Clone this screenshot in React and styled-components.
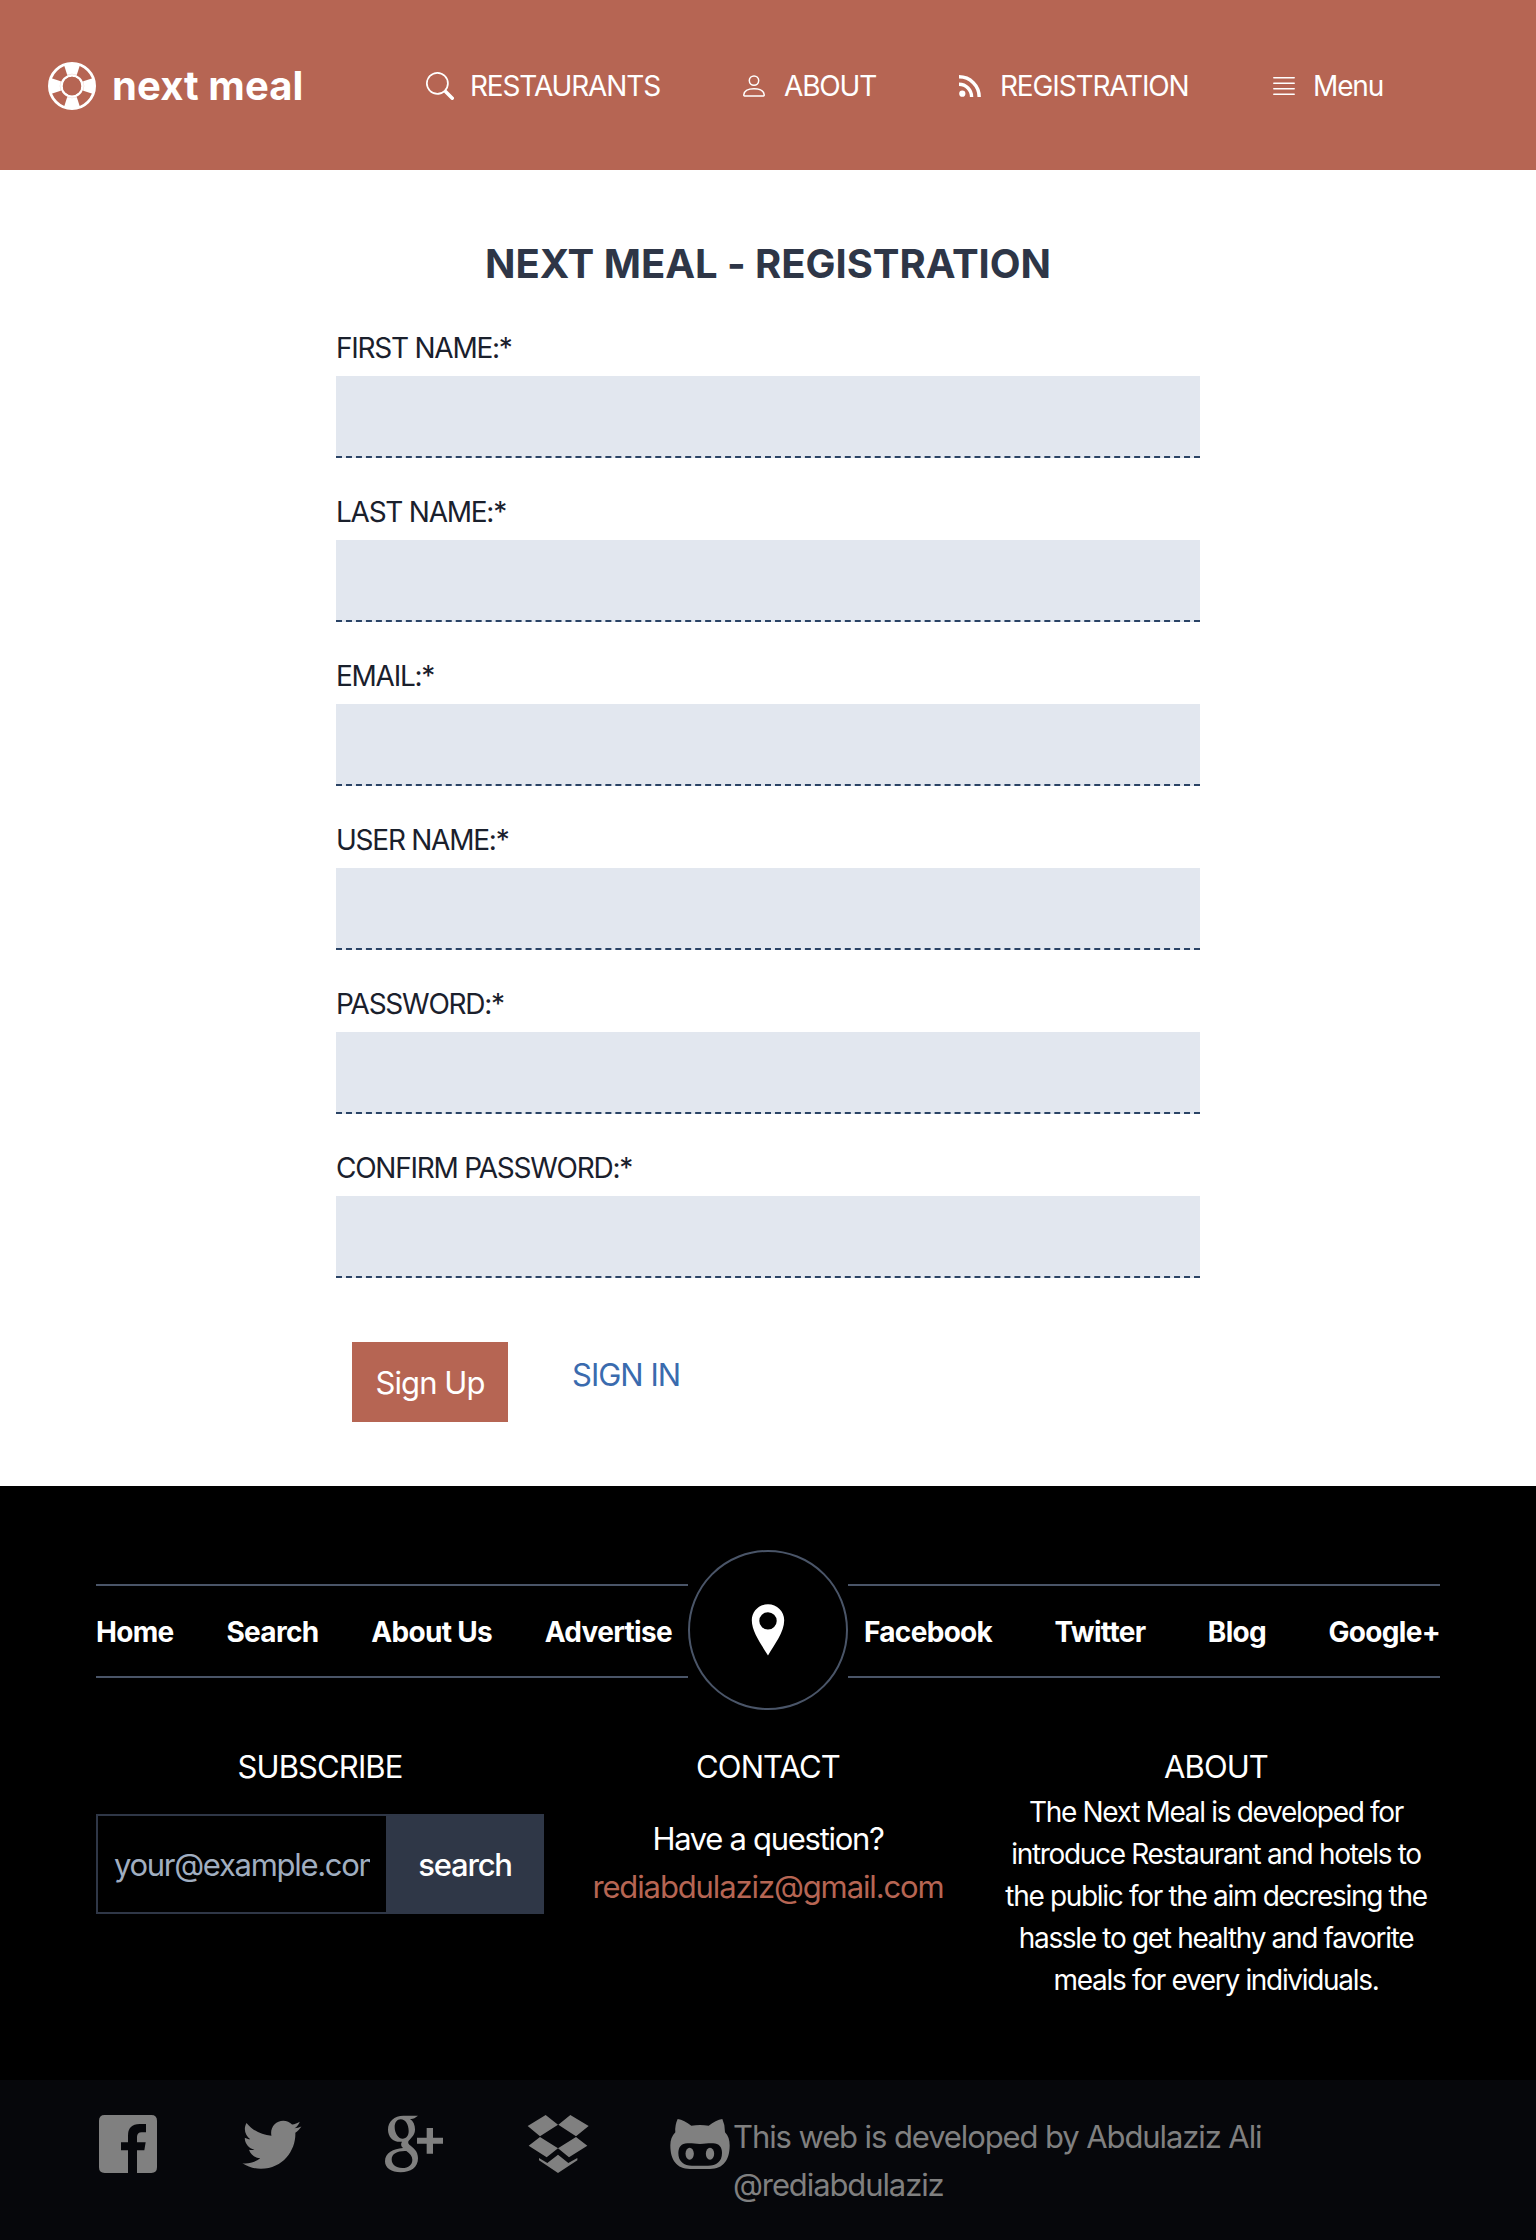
import React from "react";
import styled, { createGlobalStyle } from "styled-components";
import { IoLogoTwitter } from "react-icons/io";
import { BsSearch } from "react-icons/bs";

const Global = createGlobalStyle`
  *, *::before, *::after { box-sizing: border-box; }
  body {
    margin: 0;
    font-family: Inter, "Liberation Sans", sans-serif;
    font-size: 32px;
    line-height: 1.5;
    color: #1a202c;
    background: #fff;
  }
  h1, h2, p { margin: 0; font-weight: 400; }
  a { color: inherit; text-decoration: none; }
  input, button { font: inherit; border: 0; border-radius: 0; margin: 0; outline: 0; }
  svg { display: block; flex: none; }
`;

const Header = styled.header`
  height: 170px;
  padding: 2px 48px 0;
  display: flex;
  align-items: center;
  background: #b66553;
  color: #fff;
`;
const Brand = styled.a`
  display: flex;
  align-items: center;
  width: 378px;
  font-size: 40px;
  font-weight: 700;
  white-space: nowrap;
`;
const BrandName = styled.span`
  margin-left: 16px;
  letter-spacing: 0.1px;
`;
const NavLink = styled.a`
  display: flex;
  align-items: center;
  width: ${(p) => p.$w}px;
  font-size: 28px;
  letter-spacing: -1.15px;
  white-space: nowrap;
`;
const NavIcon = styled.span`
  display: flex;
  width: ${(p) => p.$w}px;
`;

const Main = styled.main`
  width: 864px;
  height: 1316px;
  margin: 0 auto;
  padding-top: 64px;
`;
const Title = styled.h1`
  font-size: 40px;
  line-height: 60px;
  font-weight: 700;
  text-align: center;
  color: #2e3647;
  letter-spacing: -0.05px;
`;
const Form = styled.form`
  padding-top: 32px;
`;
const Field = styled.label`
  display: block;
  height: 164px;
  padding-top: 1px;
  font-size: 28px;
  line-height: 42px;
  letter-spacing: -1.25px;
`;
const Input = styled.input`
  display: block;
  width: 100%;
  height: 82px;
  margin-top: 7px;
  padding: 16px;
  background: #e2e7ef;
  border-bottom: 2px dashed #2a4365;
`;
const Actions = styled.div`
  display: flex;
  align-items: flex-start;
  padding: 32px 16px 0;
`;
const SignUp = styled.button`
  width: 156px;
  height: 80px;
  padding: 2px 0 0;
  background: #b66553;
  color: #fff;
  font-size: 31px;
  letter-spacing: -0.95px;
`;
const SignIn = styled.a`
  margin: 10px 0 0 64px;
  color: #3a6bae;
  font-size: 31px;
  letter-spacing: -1px;
`;

const Footer = styled.footer`
  background: #000;
  color: #fff;
`;
const FooterTop = styled.div`
  height: 594px;
  padding: 64px 96px 0;
`;
const LinkBar = styled.nav`
  display: flex;
  align-items: center;
`;
const LinkGroup = styled.div`
  flex: 1;
  display: flex;
  align-items: center;
  justify-content: space-between;
  height: 94px;
  margin-top: 2px;
  padding: 2px ${(p) => (p.$side === "left" ? "16px" : "0")} 0 ${(p) => (p.$side === "right" ? "16px" : "0")};
  border-top: 2px solid #4a5568;
  border-bottom: 2px solid #4a5568;
`;
const FooterLink = styled.a`
  font-size: 28px;
  font-weight: 700;
  letter-spacing: -0.68px;
`;
const PinCircle = styled.div`
  width: 160px;
  height: 160px;
  display: flex;
  align-items: center;
  justify-content: center;
  border: 2px solid #4a5568;
  border-radius: 50%;
`;
const Columns = styled.div`
  display: grid;
  grid-template-columns: repeat(3, 448px);
  padding-top: 33px;
`;
const Column = styled.section`
  text-align: center;
`;
const ColumnTitle = styled.h2`
  font-size: 31px;
  line-height: 48px;
  letter-spacing: -0.9px;
`;
const Subscribe = styled.form`
  display: flex;
  width: 448px;
  height: 100px;
  margin-top: 23px;
`;
const EmailInput = styled.input`
  width: 290px;
  padding: 2px 16px 0;
  background: #000;
  border: 2px solid #2f3747;
  border-right: 0;
  color: #fff;
  font-size: 31px;
  letter-spacing: -1.3px;
  &::placeholder { color: #a0aec0; opacity: 1; }
`;
const SearchButton = styled.button`
  flex: 1;
  padding: 2px 0 0;
  background: #2f3747;
  color: #fff;
  font-size: 31px;
  font-weight: 500;
  letter-spacing: -1.2px;
`;
const Contact = styled.p`
  margin-top: 24px;
  font-size: 31px;
  line-height: 48px;
  letter-spacing: -1.3px;
`;
const Mail = styled.a`
  display: block;
  color: #b66553;
  letter-spacing: -1.12px;
`;
const About = styled.p`
  font-size: 28px;
  line-height: 42px;
  letter-spacing: -1.32px;
`;
const AboutLine = styled.span`
  display: block;
  white-space: nowrap;
`;
const Bottom = styled.div`
  display: flex;
  height: 160px;
  padding: 32px 96px 0;
  background: #06070b;
  color: #808080;
`;
const Social = styled.a`
  width: ${(p) => (p.$last ? 65 : 143)}px;
  height: 64px;
`;
const Credit = styled.p`
  padding-top: 1px;
  font-size: 31px;
  line-height: 48px;
  letter-spacing: -1.1px;
`;

const Lifebuoy = () => (
  <svg width="48" height="48" viewBox="-24 -24 48 48" fill="currentColor">
    <circle r="22.6" fill="none" stroke="currentColor" strokeWidth="2.8" />
    {[0, 90, 180, 270].map((a) => (
      <path key={a} transform={`rotate(${a})`} d="M-8.3 -22 L-4.6 -10.5 H4.6 L8.3 -22 Z" />
    ))}
    <circle r="11.8" fill="none" stroke="#b66553" strokeWidth="0.5" opacity="0.5" />
    <circle r="10.4" fill="none" stroke="currentColor" strokeWidth="2.4" />
    <circle r="9.2" fill="#b66553" />
  </svg>
);
const PersonIcon = () => (
  <svg width="22" height="22" viewBox="0 0 22 22" fill="none" stroke="currentColor" strokeWidth="1.5" strokeLinejoin="round">
    <circle cx="11" cy="5.6" r="4.7" />
    <path d="M1.6 20.9 C1 20.9 .7 20.5 .8 19.8 C1.2 15.8 5 13.7 11 13.7 S20.8 15.8 21.2 19.8 C21.3 20.5 21 20.9 20.4 20.9 Z" />
  </svg>
);
const FeedIcon = () => (
  <svg width="22" height="22" viewBox="0 0 22 22" fill="none" stroke="currentColor" strokeWidth="3.4">
    <circle cx="3.3" cy="18.7" r="3.1" fill="currentColor" stroke="none" />
    <path d="M0 1.8 C11.2 1.8 20.2 10.8 20.2 22 M0 9.2 C7.1 9.2 12.6 14.9 12.6 22" />
  </svg>
);
const LinesIcon = () => (
  <svg width="22" height="20" viewBox="0 0 22 20" fill="none" stroke="currentColor" strokeWidth="1.5" strokeLinecap="round">
    <path d="M.8 1.8 H21.2 M.8 7.2 H21.2 M.8 12.7 H21.2 M.8 18.2 H21.2" />
  </svg>
);
const Pin = () => (
  <svg width="34" height="52" viewBox="0 0 34 52" fill="currentColor">
    <path fillRule="evenodd" d="M17 .3 C8 .3 .8 7.3 .8 16.3 C.8 28 10.5 40.5 17 51.6 C23.5 40.5 33.2 28 33.2 16.3 C33.2 7.3 26 .3 17 .3 Z M17 8.2 A8.7 8.7 0 1 1 17 25.6 A8.7 8.7 0 1 1 17 8.2 Z" />
  </svg>
);
const FacebookIcon = () => (
  <svg width="64" height="64" viewBox="48 126 192 192" fill="currentColor">
    <path d="M74 135 H214 Q231 135 231 152 V292 Q231 309 214 309 H171 V241 H193 L197 217 H171 V201 Q171 187 185 187 H198 V162 H179 Q144 162 144 197 V217 H123 V241 H144 V309 H74 Q57 309 57 292 V152 Q57 135 74 135 Z" />
  </svg>
);
const TwitterIcon = () => <IoLogoTwitter size={64} viewBox="-7 -6 512 512" />;
const GooglePlusIcon = () => (
  <svg width="64" height="64" viewBox="906 126 192 192" fill="currentColor">
    <path fillRule="evenodd" d="M970 137 H1014 L1003 145 Q997 148 990 147 C1000 153 1005 165 1005 178 C1005 192 998 200 991 207 C984 213 982 218 988 224 C998 233 1014 241 1014 265 C1014 292 992 307 962 307 C934 307 915 294 915 274 C915 248 940 237 969 234 C962 228 962 221 966 215 C941 218 924 202 924 179 C924 154 943 137 970 137 Z M962 148 C951 148 944 158 944 171 C944 189 954 206 968 206 C979 206 986 197 986 183 C986 165 977 148 962 148 Z M974 243 C951 243 935 252 935 268 C935 284 947 294 967 294 C986 294 997 284 997 269 C997 258 990 251 979 243 Z" />
    <path d="M1040 174 H1059 V203 H1089 V221 H1059 V251 H1040 V221 H1011 V203 H1040 Z" />
  </svg>
);
const DropboxIcon = () => (
  <svg width="64" height="64" viewBox="135 126 192 192" fill="currentColor">
    <path d="M197 135 L234 164 L180 199 L143 168 Z M271 135 L326 168 L288 199 L235 164 Z M180 201 L234 235 L200 262 L146 227 Z M288 201 L322 227 L267 262 L234 235 Z M234 254 L265 279 L292 264 V271 L234 309 L177 271 V264 L202 279 Z" />
  </svg>
);
const OctocatIcon = () => (
  <svg width="64" height="64" viewBox="564 126 192 192" fill="currentColor">
    <path fillRule="evenodd" d="M593 147 C606 149 620 156 634 167 Q660 163 686 167 C700 156 714 149 727 147 Q736 166 735 187 C745 197 749 210 749 226 C749 270 730 297 690 297 H630 C590 297 571 270 571 226 C571 210 576 197 586 187 Q584 166 593 147 Z M622 220 C604 220 595 232 595 249 C595 275 612 287 636 287 H684 C709 287 726 275 726 249 C726 232 717 220 699 220 C685 219 676 222 660 222 C645 222 636 219 622 220 Z" />
    <ellipse cx="629" cy="251" rx="12.5" ry="18" />
    <ellipse cx="690" cy="251" rx="12.5" ry="18" />
  </svg>
);

const FIELDS = ["FIRST NAME:*", "LAST NAME:*", "EMAIL:*", "USER NAME:*", "PASSWORD:*", "CONFIRM PASSWORD:*"];
const SOCIAL = [FacebookIcon, TwitterIcon, GooglePlusIcon, DropboxIcon, OctocatIcon];
const ABOUT = [
  "The Next Meal is developed for",
  "introduce Restaurant and hotels to",
  "the public for the aim decresing the",
  "hassle to get healthy and favorite",
  "meals for every individuals.",
];

export default function App() {
  return (
    <>
      <Global />
      <Header>
        <Brand href="#">
          <Lifebuoy />
          <BrandName>next meal</BrandName>
        </Brand>
        <NavLink href="#" $w={317}>
          <NavIcon $w={44}><BsSearch size={28} /></NavIcon>RESTAURANTS
        </NavLink>
        <NavLink href="#" $w={216}>
          <NavIcon $w={41}><PersonIcon /></NavIcon>ABOUT
        </NavLink>
        <NavLink href="#" $w={314}>
          <NavIcon $w={41}><FeedIcon /></NavIcon>REGISTRATION
        </NavLink>
        <NavLink href="#" $w={120}>
          <NavIcon $w={40}><LinesIcon /></NavIcon>Menu
        </NavLink>
      </Header>
      <Main>
        <Title>NEXT MEAL - REGISTRATION</Title>
        <Form>
          {FIELDS.map((f) => (
            <Field key={f}>{f}<Input /></Field>
          ))}
          <Actions>
            <SignUp type="button">Sign Up</SignUp>
            <SignIn href="#">SIGN IN</SignIn>
          </Actions>
        </Form>
      </Main>
      <Footer>
        <FooterTop>
          <LinkBar>
            <LinkGroup $side="left">
              {["Home", "Search", "About Us", "Advertise"].map((l) => <FooterLink key={l} href="#">{l}</FooterLink>)}
            </LinkGroup>
            <PinCircle><Pin /></PinCircle>
            <LinkGroup $side="right">
              {["Facebook", "Twitter", "Blog", "Google+"].map((l) => <FooterLink key={l} href="#">{l}</FooterLink>)}
            </LinkGroup>
          </LinkBar>
          <Columns>
            <Column>
              <ColumnTitle>SUBSCRIBE</ColumnTitle>
              <Subscribe>
                <EmailInput placeholder="your@example.com" />
                <SearchButton type="button">search</SearchButton>
              </Subscribe>
            </Column>
            <Column>
              <ColumnTitle>CONTACT</ColumnTitle>
              <Contact>Have a question?<Mail href="#">rediabdulaziz@gmail.com</Mail></Contact>
            </Column>
            <Column>
              <ColumnTitle>ABOUT</ColumnTitle>
              <About>{ABOUT.map((l) => <AboutLine key={l}>{l}</AboutLine>)}</About>
            </Column>
          </Columns>
        </FooterTop>
        <Bottom>
          {SOCIAL.map((Icon, i) => (
            <Social key={i} href="#" $last={i === SOCIAL.length - 1}><Icon /></Social>
          ))}
          <Credit>This web is developed by Abdulaziz Ali<br />@rediabdulaziz</Credit>
        </Bottom>
      </Footer>
    </>
  );
}
